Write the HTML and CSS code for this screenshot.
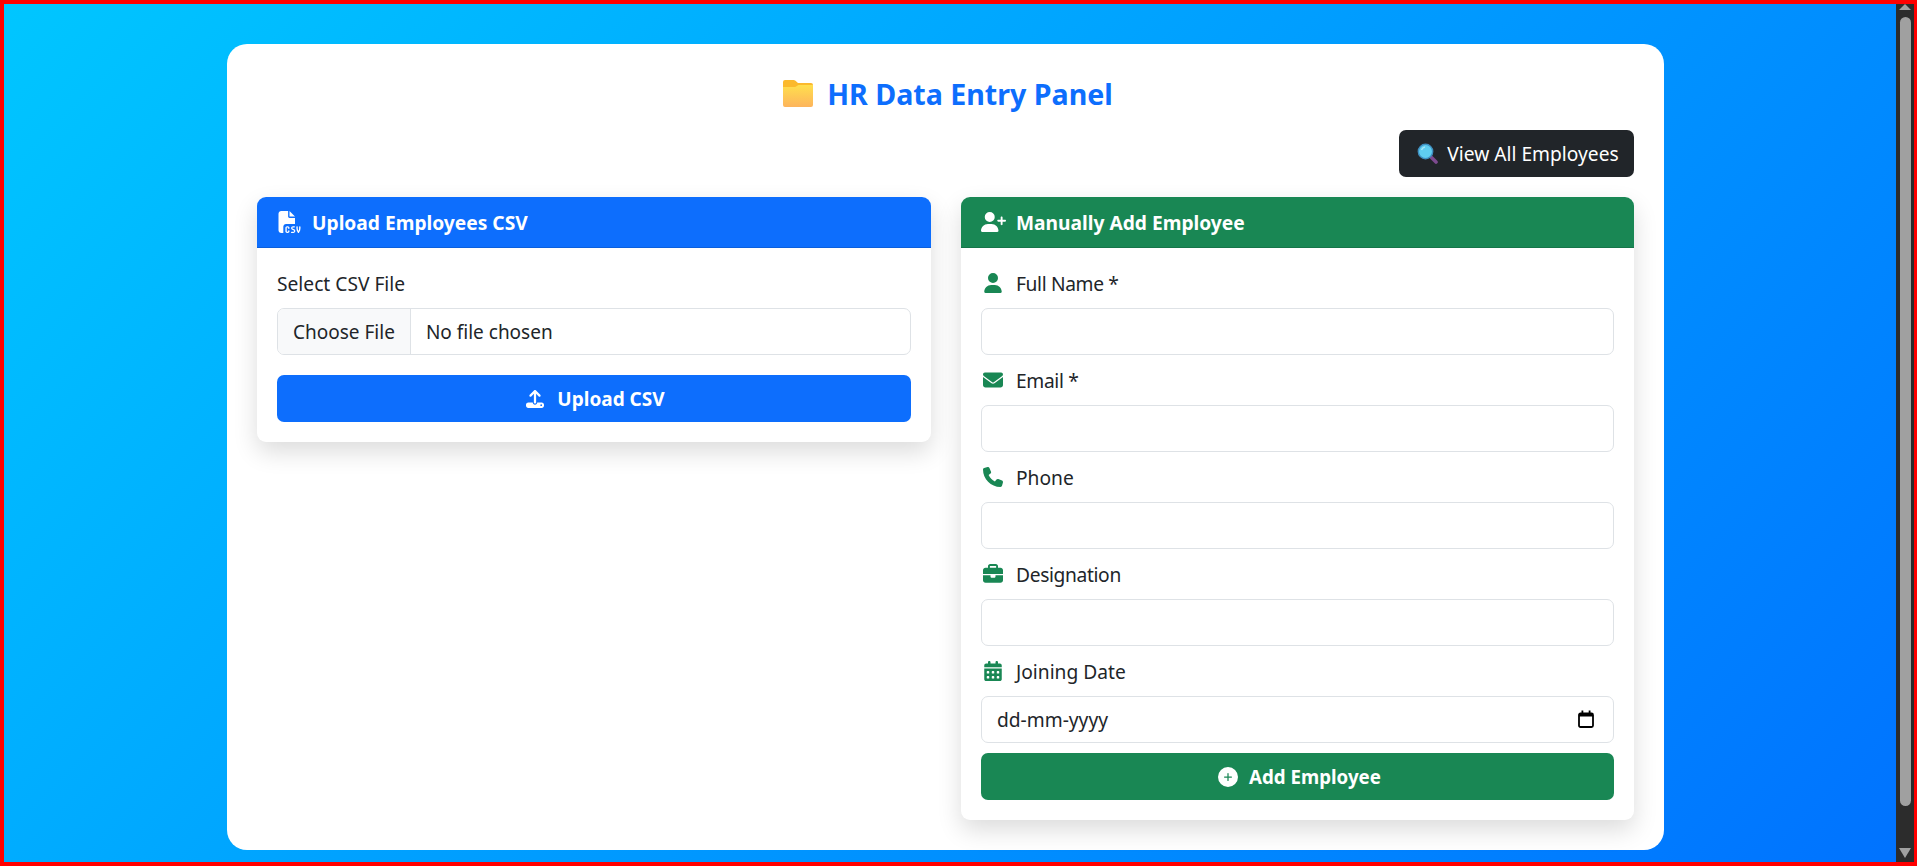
FILE: index.html
```html
<!DOCTYPE html>
<html lang="en">
<head>
<meta charset="utf-8">
<title>HR Data Entry Panel</title>
<link rel="stylesheet" href="styles.css">
</head>
<body>
<div class="frame">
  <main class="page">
    <section class="panel">
      <h1 class="title">
        <svg class="folder" viewBox="0 0 30 27"><defs><linearGradient id="fg" x1="0" y1="0" x2="0" y2="1"><stop offset="0" stop-color="#ffdf4d"/><stop offset="1" stop-color="#fdb45c"/></linearGradient></defs><path fill="#fbb92d" d="M2 0h8.5c.8 0 1.400.3 2 .8L15 3h13a2 2 0 0 1 2 2v3H0V2a2 2 0 0 1 2-2z"/><path fill="url(#fg)" d="M0 7h11.500c.6 0 1-.1 1.500-.5L15.500 5H30v20a2 2 0 0 1-2 2H2a2 2 0 0 1-2-2z"/></svg>
        <span>HR Data Entry Panel</span>
      </h1>
      <div class="toolbar">
        <a class="btn btn-dark" href="#">
          <svg class="lens" viewBox="0 0 21 21"><path d="M13 13l6 6" stroke="#7d4a8f" stroke-width="3.600" stroke-linecap="round"/><circle cx="8.500" cy="8.500" r="7.200" fill="#5fcdf0" stroke="#3f8fc0" stroke-width="1.400"/><path d="M4.500 7a4.500 4.500 0 0 1 3.500-3" stroke="#a8e6f8" stroke-width="1.400" fill="none"/></svg>
          <span>View All Employees</span>
        </a>
      </div>
      <div class="columns">
        <article class="card">
          <header class="card-head head-blue">
            <svg class="head-icon" viewBox="0 0 512 512"><path d="M0 64C0 28.700 28.700 0 64 0H224V128c0 17.700 14.300 32 32 32H384V304H176c-35.300 0-64 28.700-64 64V512H64c-35.300 0-64-28.700-64-64V64zm384 64H256V0L384 128zM200 352h16c22.100 0 40 17.900 40 40v8c0 8.800-7.200 16-16 16s-16-7.200-16-16v-8c0-4.400-3.600-8-8-8H200c-4.400 0-8 3.600-8 8v80c0 4.400 3.600 8 8 8h16c4.400 0 8-3.600 8-8v-8c0-8.800 7.200-16 16-16s16 7.200 16 16v8c0 22.100-17.900 40-40 40H200c-22.100 0-40-17.900-40-40V392c0-22.100 17.900-40 40-40zm133.100 0H368c8.800 0 16 7.200 16 16s-7.200 16-16 16H333.100c-7.200 0-13.100 5.900-13.100 13.100c0 5.200 3 9.900 7.800 12l37.400 16.600c16.300 7.200 26.800 23.400 26.800 41.200c0 24.900-20.200 45.100-45.100 45.100H304c-8.800 0-16-7.200-16-16s7.200-16 16-16h47.900c7.200 0 13.100-5.900 13.100-13.100c0-5.200-3-9.900-7.800-12l-37.400-16.600c-16.300-7.200-26.800-23.400-26.800-41.200c0-24.900 20.200-45.100 45.100-45.100zm98.900 0c8.800 0 16 7.200 16 16v31.600c0 23 5.500 45.600 16 66c10.500-20.300 16-42.900 16-66V368c0-8.800 7.200-16 16-16s16 7.200 16 16v31.600c0 34.700-10.300 68.700-29.600 97.600l-5.100 7.700c-3 4.500-8 7.100-13.300 7.100s-10.300-2.700-13.300-7.100l-5.100-7.700c-19.300-28.900-29.600-62.900-29.600-97.600V368c0-8.800 7.200-16 16-16z"/></svg>
            <span>Upload Employees CSV</span>
          </header>
          <form class="card-body">
            <label class="field-label" for="csv">Select CSV File</label>
            <input class="control file-control" id="csv" type="file">
            <button class="btn btn-blue btn-wide upload" type="button">
              <svg class="btn-icon" viewBox="0 0 512 512"><path d="M288 109.300V352c0 17.700-14.300 32-32 32s-32-14.300-32-32V109.300l-73.400 73.400c-12.500 12.500-32.800 12.500-45.300 0s-12.500-32.800 0-45.300l128-128c12.500-12.500 32.800-12.500 45.300 0l128 128c12.500 12.500 12.500 32.800 0 45.300s-32.800 12.500-45.300 0L288 109.300zM64 352H192c0 35.300 28.700 64 64 64s64-28.700 64-64H448c35.300 0 64 28.700 64 64v32c0 35.300-28.700 64-64 64H64c-35.300 0-64-28.700-64-64V416c0-35.300 28.700-64 64-64zM432 456a24 24 0 1 0 0-48 24 24 0 1 0 0 48z"/></svg>
              <span>Upload CSV</span>
            </button>
          </form>
        </article>
        <article class="card">
          <header class="card-head head-green">
            <svg class="head-icon wide" viewBox="0 0 640 512"><path d="M96 128a128 128 0 1 1 256 0A128 128 0 1 1 96 128zM0 482.300C0 383.800 79.800 304 178.300 304h91.400C368.200 304 448 383.800 448 482.300c0 16.400-13.300 29.700-29.700 29.700H29.700C13.300 512 0 498.700 0 482.300zM504 312V248H440c-13.300 0-24-10.700-24-24s10.700-24 24-24h64V136c0-13.300 10.700-24 24-24s24 10.700 24 24v64h64c13.300 0 24 10.700 24 24s-10.700 24-24 24H552v64c0 13.300-10.700 24-24 24s-24-10.700-24-24z"/></svg>
            <span>Manually Add Employee</span>
          </header>
          <form class="card-body">
            <label class="field-label tight" for="name">
              <span class="label-icon"><svg class="i-user" viewBox="0 0 448 512"><path d="M224 256A128 128 0 1 0 224 0a128 128 0 1 0 0 256zm-45.700 48C79.800 304 0 383.800 0 482.300C0 498.700 13.300 512 29.700 512H418.300c16.400 0 29.700-13.300 29.700-29.700C448 383.800 368.200 304 269.700 304H178.300z"/></svg></span>Full Name *
            </label>
            <input class="control field" id="name" type="text">
            <label class="field-label tight" for="email">
              <span class="label-icon"><svg class="i-wide" viewBox="0 0 512 512"><path d="M48 64C21.500 64 0 85.500 0 112c0 15.100 7.100 29.300 19.200 38.400L236.800 313.600c11.400 8.500 27 8.500 38.400 0L492.800 150.400c12.100-9.100 19.200-23.300 19.200-38.400c0-26.500-21.500-48-48-48H48zM0 176V384c0 35.300 28.700 64 64 64H448c35.300 0 64-28.700 64-64V176L294.400 339.200c-22.800 17.100-54 17.100-76.800 0L0 176z"/></svg></span>Email *
            </label>
            <input class="control field" id="email" type="text">
            <label class="field-label" for="phone">
              <span class="label-icon"><svg class="i-wide" viewBox="0 0 512 512"><path d="M164.900 24.600c-7.700-18.600-28-28.500-47.400-23.200l-88 24C12.100 30.200 0 46 0 64C0 311.400 200.600 512 448 512c18 0 33.800-12.100 38.600-29.500l24-88c5.300-19.400-4.600-39.700-23.200-47.400l-96-40c-16.300-6.800-35.200-2.100-46.300 11.600L304.700 368C234.300 334.700 177.300 277.700 144 207.300L193.300 167c13.700-11.200 18.400-30 11.600-46.300l-40-96z"/></svg></span>Phone
            </label>
            <input class="control field" id="phone" type="text">
            <label class="field-label tight" for="role">
              <span class="label-icon"><svg class="i-wide" viewBox="0 0 512 512"><path d="M184 48H328c4.400 0 8 3.600 8 8V96H176V56c0-4.400 3.600-8 8-8zm-56 8V96H64C28.700 96 0 124.700 0 160v96H192 320 512V160c0-35.300-28.700-64-64-64H384V56c0-30.900-25.100-56-56-56H184c-30.900 0-56 25.100-56 56zM512 288H320v32c0 17.700-14.300 32-32 32H224c-17.700 0-32-14.300-32-32V288H0V416c0 35.300 28.700 64 64 64H448c35.300 0 64-28.700 64-64V288z"/></svg></span>Designation
            </label>
            <input class="control field" id="role" type="text">
            <label class="field-label" for="joined">
              <span class="label-icon"><svg class="i-user" viewBox="0 0 448 512"><path d="M128 0c17.700 0 32 14.300 32 32V64H288V32c0-17.700 14.300-32 32-32s32 14.300 32 32V64h48c26.500 0 48 21.500 48 48v48H0V112C0 85.500 21.500 64 48 64H96V32c0-17.700 14.300-32 32-32zM0 192H448V464c0 26.500-21.500 48-48 48H48c-26.500 0-48-21.500-48-48V192zm64 80v32c0 8.800 7.200 16 16 16h32c8.800 0 16-7.200 16-16V272c0-8.800-7.200-16-16-16H80c-8.800 0-16 7.200-16 16zm128 0v32c0 8.800 7.200 16 16 16h32c8.800 0 16-7.200 16-16V272c0-8.800-7.200-16-16-16H208c-8.800 0-16 7.200-16 16zm144-16c-8.800 0-16 7.200-16 16v32c0 8.800 7.200 16 16 16h32c8.800 0 16-7.200 16-16V272c0-8.800-7.200-16-16-16H336zM64 400v32c0 8.800 7.200 16 16 16h32c8.800 0 16-7.200 16-16V400c0-8.800-7.200-16-16-16H80c-8.800 0-16 7.200-16 16zm144-16c-8.800 0-16 7.200-16 16v32c0 8.800 7.200 16 16 16h32c8.800 0 16-7.200 16-16V400c0-8.800-7.200-16-16-16H208zm112 16v32c0 8.800 7.200 16 16 16h32c8.800 0 16-7.200 16-16V400c0-8.800-7.200-16-16-16H336c-8.800 0-16 7.200-16 16z"/></svg></span>Joining Date
            </label>
            <div class="date-wrap">
              <input class="control date-control" id="joined" type="text" value="dd-mm-yyyy">
              <svg class="picker" viewBox="0 0 16 18"><rect x="1" y="3.500" width="14" height="13.500" rx="1.500" fill="none" stroke="#000" stroke-width="1.800"/><path d="M1 3h14v3.500H1zM3.500 .5h1.800v3H3.500zM10.700 .5h1.800v3h-1.800z" fill="#000"/></svg>
            </div>
            <button class="btn btn-green btn-wide add" type="button">
              <svg class="btn-icon" viewBox="0 0 512 512"><path d="M256 512A256 256 0 1 0 256 0a256 256 0 1 0 0 512zM240 344V272H168c-9 0-16-7-16-16s7-16 16-16h72V168c0-9 7-16 16-16s16 7 16 16v72h72c9 0 16 7 16 16s-7 16-16 16H272v72c0 9-7 16-16 16s-16-7-16-16z"/></svg>
              <span>Add Employee</span>
            </button>
          </form>
        </article>
      </div>
    </section>
  </main>
  <aside class="scrollbar" aria-hidden="true">
    <span class="arrow-up"></span>
    <span class="thumb"></span>
    <span class="arrow-down"></span>
  </aside>
</div>
</body>
</html>
```
FILE: styles.css
```css
* { box-sizing: border-box; }
html, body { margin: 0; height: 100%; overflow: hidden; }
body {
  font-family: "Noto Sans", "Open Sans", sans-serif;
  font-size: 19.2px;
  color: #212529;
}
.frame {
  display: flex;
  width: 1917px;
  height: 866px;
  border-style: solid;
  border-color: #ff0000;
  border-width: 4px 3px 4px 4px;
  background: linear-gradient(135deg, #00c6ff, #0072ff);
}
.page { flex: 1; padding: 40px 0 0 223px; min-width: 0; }
.panel {
  width: 1437px;
  height: 806px;
  padding: 30px;
  background: #fff;
  border-radius: 20px;
}
.title {
  display: flex;
  align-items: center;
  justify-content: center;
  gap: 14px;
  height: 38px;
  margin: 0 0 18px;
  padding-left: 5px;
  font-size: 28.600px;
  font-weight: 700;
  color: #0d6efd;
}
.folder { width: 30px; height: 27px; }
.toolbar { display: flex; justify-content: flex-end; margin-bottom: 20px; }
.btn {
  display: flex;
  align-items: center;
  justify-content: center;
  height: 47px;
  border: 0;
  border-radius: 7px;
  font: inherit;
  color: #fff;
  text-decoration: none;
}
.btn-dark { width: 235px; gap: 9px; padding-left: 3px; background: #212529; }
.lens { width: 21px; height: 21px; }
.columns { display: grid; grid-template-columns: 674px 673px; gap: 30px; align-items: start; }
.card {
  border-radius: 9px;
  background: #fff;
  box-shadow: 0 10px 24px rgba(0, 0, 0, .14);
}
.card-head {
  display: flex;
  align-items: center;
  gap: 10px;
  height: 51px;
  padding: 0 20px;
  border-radius: 9px 9px 0 0;
  border-bottom: 1px solid rgba(0, 0, 0, .13);
  color: #fff;
  font-weight: 700;
}
.head-blue { background: #0d6efd; }
.head-green { background: #198754; }
.head-icon { width: 25px; height: 22px; fill: #fff; }
.head-icon.wide { height: 20px; }
.card-body { display: flex; flex-direction: column; padding: 20px; }
.field-label { display: flex; align-items: center; height: 30px; margin-bottom: 10px; }
.tight { letter-spacing: -.35px; }
.label-icon { display: flex; justify-content: center; width: 24px; margin-right: 11px; }
.label-icon svg { fill: #198754; }
.i-user { width: 18px; height: 20px; }
.i-wide { width: 20px; height: 20px; }
.control {
  display: block;
  width: 100%;
  height: 47px;
  border: 1px solid #dee2e6;
  border-radius: 7px;
  background: #fff;
  padding: 0 15px;
  font: inherit;
  color: #212529;
}
.field { margin-bottom: 10px; }
.file-control { padding: 1px 0 0; margin-bottom: 20px; font-size: 19px; line-height: 45px; overflow: hidden; }
.file-control::file-selector-button {
  height: 47px;
  margin: -1px 15px -1px 0;
  padding: 0 15px;
  border: 0;
  border-right: 1px solid #dee2e6;
  background: #f8f9fa;
  font: inherit;
  color: #212529;
}
.date-wrap { position: relative; margin-bottom: 10px; }
.picker { position: absolute; right: 20px; top: 14px; width: 16px; height: 18px; }
.btn-wide { width: 100%; gap: 11px; font-weight: 700; }
.btn-blue { background: #0d6efd; }
.btn-green { background: #198754; }
.btn-icon { width: 20px; height: 20px; fill: #fff; }
.upload { gap: 13px; padding-left: 9px; font-size: 19px; }
.upload .btn-icon { width: 18px; height: 18px; }
.add { padding-left: 10px; font-size: 18.700px; }
.scrollbar {
  display: flex;
  flex-direction: column;
  align-items: center;
  width: 18px;
  background: #2c2c2c;
}
.arrow-up {
  width: 0;
  height: 0;
  border-left: 6px solid transparent;
  border-right: 6px solid transparent;
  border-bottom: 6px solid #a0a0a0;
}
.thumb {
  width: 11px;
  height: 789px;
  margin-top: 7px;
  border-radius: 6px;
  background: #a0a0a0;
}
.arrow-down {
  width: 0;
  height: 0;
  margin-top: 42px;
  border-left: 6px solid transparent;
  border-right: 6px solid transparent;
  border-top: 10px solid #a0a0a0;
}
```
